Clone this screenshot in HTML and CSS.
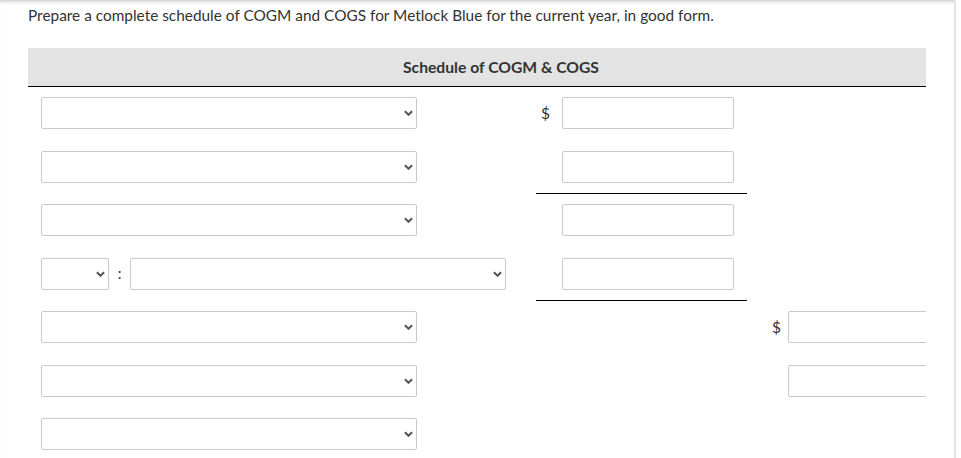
FILE: index.html
```html
<!DOCTYPE html>
<html lang="en">
<head>
<meta charset="utf-8">
<title>Schedule of COGM &amp; COGS</title>
<link rel="stylesheet" href="styles.css">
</head>
<body>
<div class="page">
  <p class="prompt">Prepare a complete schedule of COGM and COGS for Metlock Blue for the current year, in good form.</p>
  <div class="sheet">
    <div class="sheet-head">Schedule of COGM &amp; COGS</div>
    <div class="grid">
      <!-- row 1 -->
      <div class="cell c1"><div class="sel w376"><select></select><svg class="chev" viewBox="0 0 10 6"><path d="M1 1l4 4 4-4"/></svg></div></div>
      <div class="cell c2"><span class="cur">$</span><input class="amt" type="text"></div>
      <div class="cell c3"></div>
      <!-- row 2 -->
      <div class="cell c1"><div class="sel w376"><select></select><svg class="chev" viewBox="0 0 10 6"><path d="M1 1l4 4 4-4"/></svg></div></div>
      <div class="cell c2 rule"><span class="cur"></span><input class="amt" type="text"></div>
      <div class="cell c3"></div>
      <!-- row 3 -->
      <div class="cell c1"><div class="sel w376"><select></select><svg class="chev" viewBox="0 0 10 6"><path d="M1 1l4 4 4-4"/></svg></div></div>
      <div class="cell c2"><span class="cur"></span><input class="amt" type="text"></div>
      <div class="cell c3"></div>
      <!-- row 4 -->
      <div class="cell c1"><div class="sel w68"><select></select><svg class="chev" viewBox="0 0 10 6"><path d="M1 1l4 4 4-4"/></svg></div><span class="colon">:</span><div class="sel w376"><select></select><svg class="chev" viewBox="0 0 10 6"><path d="M1 1l4 4 4-4"/></svg></div></div>
      <div class="cell c2 rule"><span class="cur"></span><input class="amt" type="text"></div>
      <div class="cell c3"></div>
      <!-- row 5 -->
      <div class="cell c1"><div class="sel w376"><select></select><svg class="chev" viewBox="0 0 10 6"><path d="M1 1l4 4 4-4"/></svg></div></div>
      <div class="cell c2"></div>
      <div class="cell c3"><span class="cur">$</span><input class="amt" type="text"></div>
      <!-- row 6 -->
      <div class="cell c1"><div class="sel w376"><select></select><svg class="chev" viewBox="0 0 10 6"><path d="M1 1l4 4 4-4"/></svg></div></div>
      <div class="cell c2"></div>
      <div class="cell c3"><span class="cur"></span><input class="amt" type="text"></div>
      <!-- row 7 -->
      <div class="cell c1"><div class="sel w376"><select></select><svg class="chev" viewBox="0 0 10 6"><path d="M1 1l4 4 4-4"/></svg></div></div>
      <div class="cell c2"></div>
      <div class="cell c3"></div>
    </div>
  </div>
</div>
</body>
</html>
```
FILE: styles.css
```css
html, body {
  margin: 0;
  padding: 0;
  background: #fff;
}
body {
  font-family: Lato, "Open Sans", Arial, sans-serif;
  color: #333;
  overflow: hidden;
}
.page {
  width: 956px;
  height: 100vh;
  box-sizing: border-box;
  border-right: 2px solid #e4e4e4;
  padding: 5px 0 0 28px;
  box-shadow: inset 0 4px 4px -3px rgba(0, 0, 0, 0.25);
}
.prompt {
  margin: 0;
  font-size: 15.4px;
  line-height: 20px;
  color: #333;
}
.sheet {
  width: 898px;
  margin-top: 23px;
  overflow: hidden;
}
.sheet-head {
  box-sizing: border-box;
  background: #e3e3e3;
  border-bottom: 1px solid #000;
  height: 39px;
  padding-left: 375px;
  font-size: 15.7px;
  font-weight: 700;
  line-height: 38px;
  color: #333;
}
.grid {
  display: grid;
  grid-template-columns: 508px 211px 180px;
  grid-auto-rows: 53.5px;
}
.cell {
  display: flex;
  align-items: flex-start;
  padding-top: 10px;
  box-sizing: border-box;
}
.c1 {
  padding-left: 13px;
}
.c2 {
  padding-left: 5px;
}
.c3 {
  padding-left: 25px;
}
.rule {
  border-bottom: 1px solid #000;
}
.cur {
  flex-shrink: 0;
  width: 16px;
  height: 32px;
  line-height: 32px;
  font-size: 15.5px;
  color: #333;
}
.c2 .cur {
  width: 21px;
}
.amt {
  width: 172px;
  height: 32px;
  box-sizing: border-box;
  margin: 0;
  border: 1px solid #c9c9c9;
  border-radius: 2px;
  background: #fff;
  flex-shrink: 0;
  outline: none;
}
.sel {
  position: relative;
  height: 32px;
  flex-shrink: 0;
}
.sel select {
  -webkit-appearance: none;
  appearance: none;
  display: block;
  width: 100%;
  height: 32px;
  margin: 0;
  box-sizing: border-box;
  border: 1px solid #c9c9c9;
  border-radius: 2px;
  background: #fff;
}
.w376 {
  width: 376px;
}
.w68 {
  width: 68px;
}
.chev {
  position: absolute;
  right: 4px;
  top: 13px;
  width: 9px;
  height: 6px;
  fill: none;
  stroke: #555;
  stroke-width: 2.2;
}
.colon {
  flex-shrink: 0;
  width: 21px;
  text-align: center;
  height: 32px;
  line-height: 30px;
  font-size: 15px;
  color: #333;
}
```
